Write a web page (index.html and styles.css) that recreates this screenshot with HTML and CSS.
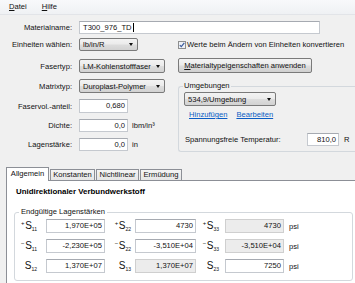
FILE: index.html
```html
<!DOCTYPE html>
<html lang="de">
<head>
<meta charset="utf-8">
<title>Material</title>
<link rel="stylesheet" href="styles.css">
</head>
<body>
<div class="menubar">
  <span class="menu"><u>D</u>atei</span>
  <span class="menu"><u>H</u>ilfe</span>
</div>

<div class="form">
  <div class="row r-name">
    <span class="lbl">Materialname:</span>
    <div class="input name">T300_976_TD<span class="caret"></span></div>
  </div>

  <div class="split">
    <div class="left">
      <div class="row r-units">
        <span class="lbl">Einheiten wählen:</span>
        <div class="combo w-units"><span>lb/in/R</span><i class="arrow"></i></div>
      </div>
      <div class="row r-fiber">
        <span class="lbl">Fasertyp:</span>
        <div class="combo w-wide"><span>LM-Kohlenstofffaser</span><i class="arrow"></i></div>
      </div>
      <div class="row r-matrix">
        <span class="lbl">Matrixtyp:</span>
        <div class="combo w-wide"><span>Duroplast-Polymer</span><i class="arrow"></i></div>
      </div>
      <div class="row r-vol">
        <span class="lbl">Faservol.-anteil:</span>
        <div class="input num w-num">0,680</div>
      </div>
      <div class="row r-dens">
        <span class="lbl">Dichte:</span>
        <div class="input num w-num">0,0</div>
        <span class="unit">lbm/in³</span>
      </div>
      <div class="row r-thick">
        <span class="lbl">Lagenstärke:</span>
        <div class="input num w-num">0,0</div>
        <span class="unit">in</span>
      </div>
    </div>

    <div class="right">
      <div class="check-row">
        <span class="checkbox">
          <svg width="8" height="8" viewBox="0 0 8 8"><rect x="0.5" y="0.5" width="7" height="7" fill="#eef1f6" stroke="#8e8f8f"/><path d="M1.8 4.1 L3.3 5.7 L6.3 1.9" fill="none" stroke="#3a5a9c" stroke-width="1.2"/></svg>
        </span>
        <span>Werte beim Ändern von Einheiten konvertieren</span>
      </div>
      <div class="button"><u>M</u>aterialtypeigenschaften anwenden</div>
      <fieldset class="group env">
        <legend>Umgebungen</legend>
        <div class="combo w-env"><span>534,9/Umgebung</span><i class="arrow"></i></div>
        <div class="links"><a>Hinzufügen</a><a>Bearbeiten</a></div>
        <div class="row temp-row">
          <span class="temp-lbl">Spannungsfreie Temperatur:</span>
          <div class="input num w-temp">810,0</div>
          <span class="unit">R</span>
        </div>
      </fieldset>
    </div>
  </div>
</div>

<div class="tabstrip">
  <div class="tab active">Allgemein</div>
  <div class="tab t-konst">Konstanten</div>
  <div class="tab t-nicht">Nichtlinear</div>
  <div class="tab t-erm">Ermüdung</div>
</div>
<div class="panel">
  <div class="heading">Unidirektionaler Verbundwerkstoff</div>
  <fieldset class="group plies">
    <legend>Endgültige Lagenstärken</legend>
    <div class="grid">
      <span class="sym"><sup>+</sup>S<sub>11</sub></span>
      <div class="input num">1,970E+05</div>
      <span class="sym"><sup>+</sup>S<sub>22</sub></span>
      <div class="input num">4730</div>
      <span class="sym"><sup>+</sup>S<sub>33</sub></span>
      <div class="input num off">4730</div>
      <span class="psi">psi</span>

      <span class="sym"><sup>−</sup>S<sub>11</sub></span>
      <div class="input num">-2,230E+05</div>
      <span class="sym"><sup>−</sup>S<sub>22</sub></span>
      <div class="input num">-3,510E+04</div>
      <span class="sym"><sup>−</sup>S<sub>33</sub></span>
      <div class="input num off">-3,510E+04</div>
      <span class="psi">psi</span>

      <span class="sym">S<sub>12</sub></span>
      <div class="input num">1,370E+07</div>
      <span class="sym">S<sub>13</sub></span>
      <div class="input num off">1,370E+07</div>
      <span class="sym">S<sub>23</sub></span>
      <div class="input num">7250</div>
      <span class="psi">psi</span>
    </div>
  </fieldset>
</div>
</body>
</html>
```

FILE: styles.css
```css
* { box-sizing: border-box; }
html, body { margin: 0; padding: 0; }
body {
  width: 355px;
  height: 283px;
  overflow: hidden;
  background: #f0f0f0;
  font-family: "Liberation Sans", Arial, sans-serif;
  font-size: 7.6px;
  color: #111;
}
u { text-decoration: underline; text-underline-offset: 1px; }

/* menu */
.menubar {
  height: 15px;
  display: flex;
  align-items: center;
  padding-left: 9px;
  gap: 15px;
  background: linear-gradient(#f8f9fb, #eff1f4);
  border-bottom: 1px solid #e2e4e8;
}
.menu { line-height: 10px; }

/* form */
.form { padding-top: 6px; }
.row { display: flex; align-items: center; }
.lbl { width: 72px; margin-right: 7px; text-align: right; flex: none; }
.r-name { height: 13px; }

.input {
  height: 13px;
  line-height: 11px;
  padding: 0 3px;
  background: #fff;
  border: 1px solid #c5c9cf;
  border-top-color: #a6aab1;
  white-space: nowrap;
  overflow: hidden;
}
.input.num { text-align: right; padding-right: 2px; }
.input.off { background: #ececec; border-color: #cfcfcf; }
.name { width: 241px; display: flex; align-items: center; }
.caret { display: inline-block; width: 1px; height: 9px; background: #000; margin-left: 1px; }

.split { display: flex; }
.left { width: 178px; flex: none; }
.right { flex: 1; min-width: 0; }

.r-units { margin-top: 4px; height: 13px; }
.r-fiber { margin-top: 8px; height: 14px; }
.r-matrix { margin-top: 6px; height: 14px; }
.r-vol { margin-top: 6px; height: 14px; }
.r-vol .input { height: 14px; line-height: 12px; }
.r-dens { margin-top: 6px; height: 13px; }
.r-thick { margin-top: 6px; height: 13px; }
.w-num { width: 49px; }
.unit { margin-left: 4px; }

.combo {
  display: flex;
  align-items: center;
  height: 100%;
  padding-left: 3px;
  border: 1px solid #7a7a7a;
  border-radius: 2px;
  background: linear-gradient(#f3f3f3 0%, #ebebeb 48%, #dddddd 52%, #d2d2d2 100%);
  white-space: nowrap;
}
.w-units { width: 59px; }
.w-wide { width: 86px; }
.arrow {
  margin-left: auto;
  margin-right: 4px;
  width: 0; height: 0;
  border-left: 2.5px solid transparent;
  border-right: 2.5px solid transparent;
  border-top: 3px solid #111;
}

/* right column */
.check-row { margin-top: 4px; height: 13px; display: flex; align-items: center; }
.checkbox { width: 8px; height: 8px; margin-right: 1px; display: flex; }
.button {
  margin-top: 7px;
  width: 134px;
  height: 15px;
  line-height: 13px;
  text-align: center;
  border: 1px solid #7a7a7a;
  border-radius: 2px;
  background: linear-gradient(#f3f3f3 0%, #ebebeb 48%, #dddddd 52%, #d0d0d0 100%);
}

.group {
  margin: 0;
  min-width: 0;
  border: 1px solid #d3d8dd;
  border-radius: 3px;
}
.group legend { padding: 0 1px; line-height: 10px; }
.env {
  margin-top: 8px;
  padding: 1px 0 5px 5px;
  border-right: none;
  border-top-right-radius: 0;
  border-bottom-right-radius: 0;
}
.env legend { margin-left: -1px; }
.w-env { width: 92px; height: 14px; }
.links { margin-top: 4px; height: 10px; line-height: 10px; display: flex; gap: 9px; padding-left: 5px; }
.links a { color: #0a5cc4; text-decoration: underline; }
.temp-row { margin-top: 13px; height: 13px; }
.temp-lbl { width: 123px; padding-left: 1px; flex: none; }
.w-temp { width: 32px; }
.temp-row .unit { margin-left: 5px; }

/* tabs */
.tabstrip {
  margin-top: 15px;
  padding-left: 6px;
  height: 14px;
  margin-bottom: -1px;
  display: flex;
  align-items: flex-start;
}
.tab {
  margin-top: 2px;
  height: 11px;
  line-height: 10px;
  text-align: center;
  border: 1px solid #8c8f96;
  border-bottom: none;
  background: linear-gradient(#f4f4f4, #e6e6e6);
  margin-left: 1px;
}
.tab.active {
  position: relative;
  z-index: 1;
  margin-top: 0;
  margin-left: 0;
  height: 14px;
  line-height: 11px;
  width: 43px;
  background: #fff;
}
.t-konst { width: 45px; }
.t-nicht { width: 43px; }
.t-erm { width: 42px; }

.panel {
  margin-left: 6px;
  width: 349px;
  height: 103px;
  background: #fff;
  border: 1px solid #8c8f96;
  border-right: none;
  border-bottom: none;
}
.heading { padding: 6px 0 0 9px; line-height: 10px; font-weight: bold; font-size: 7.9px; color: #000; }

.plies {
  width: 339px;
  margin: 10px 0 0 7px;
  padding: 2px 0 7px 4px;
}
.plies legend { padding: 0 2px; margin-left: 0; }
.grid {
  display: grid;
  grid-template-columns: 27px 59px 30px 61px 29px 59px auto;
  grid-auto-rows: 14px;
  row-gap: 6px;
  align-items: center;
}
.grid .input { height: 14px; line-height: 12px; }
.sym { text-align: right; font-size: 10px; line-height: 14px; white-space: nowrap; }
.grid .sym:nth-child(7n+1) { padding-right: 9px; }
.grid .sym:nth-child(7n+3) { padding-right: 4px; }
.grid .sym:nth-child(7n+5) { padding-right: 6px; }
.sym sup { font-size: 6px; line-height: 0; vertical-align: 4px; margin-right: 0.5px; }
.sym sub { font-size: 5px; line-height: 0; vertical-align: -1.5px; }
.psi { padding-left: 5px; }
```
